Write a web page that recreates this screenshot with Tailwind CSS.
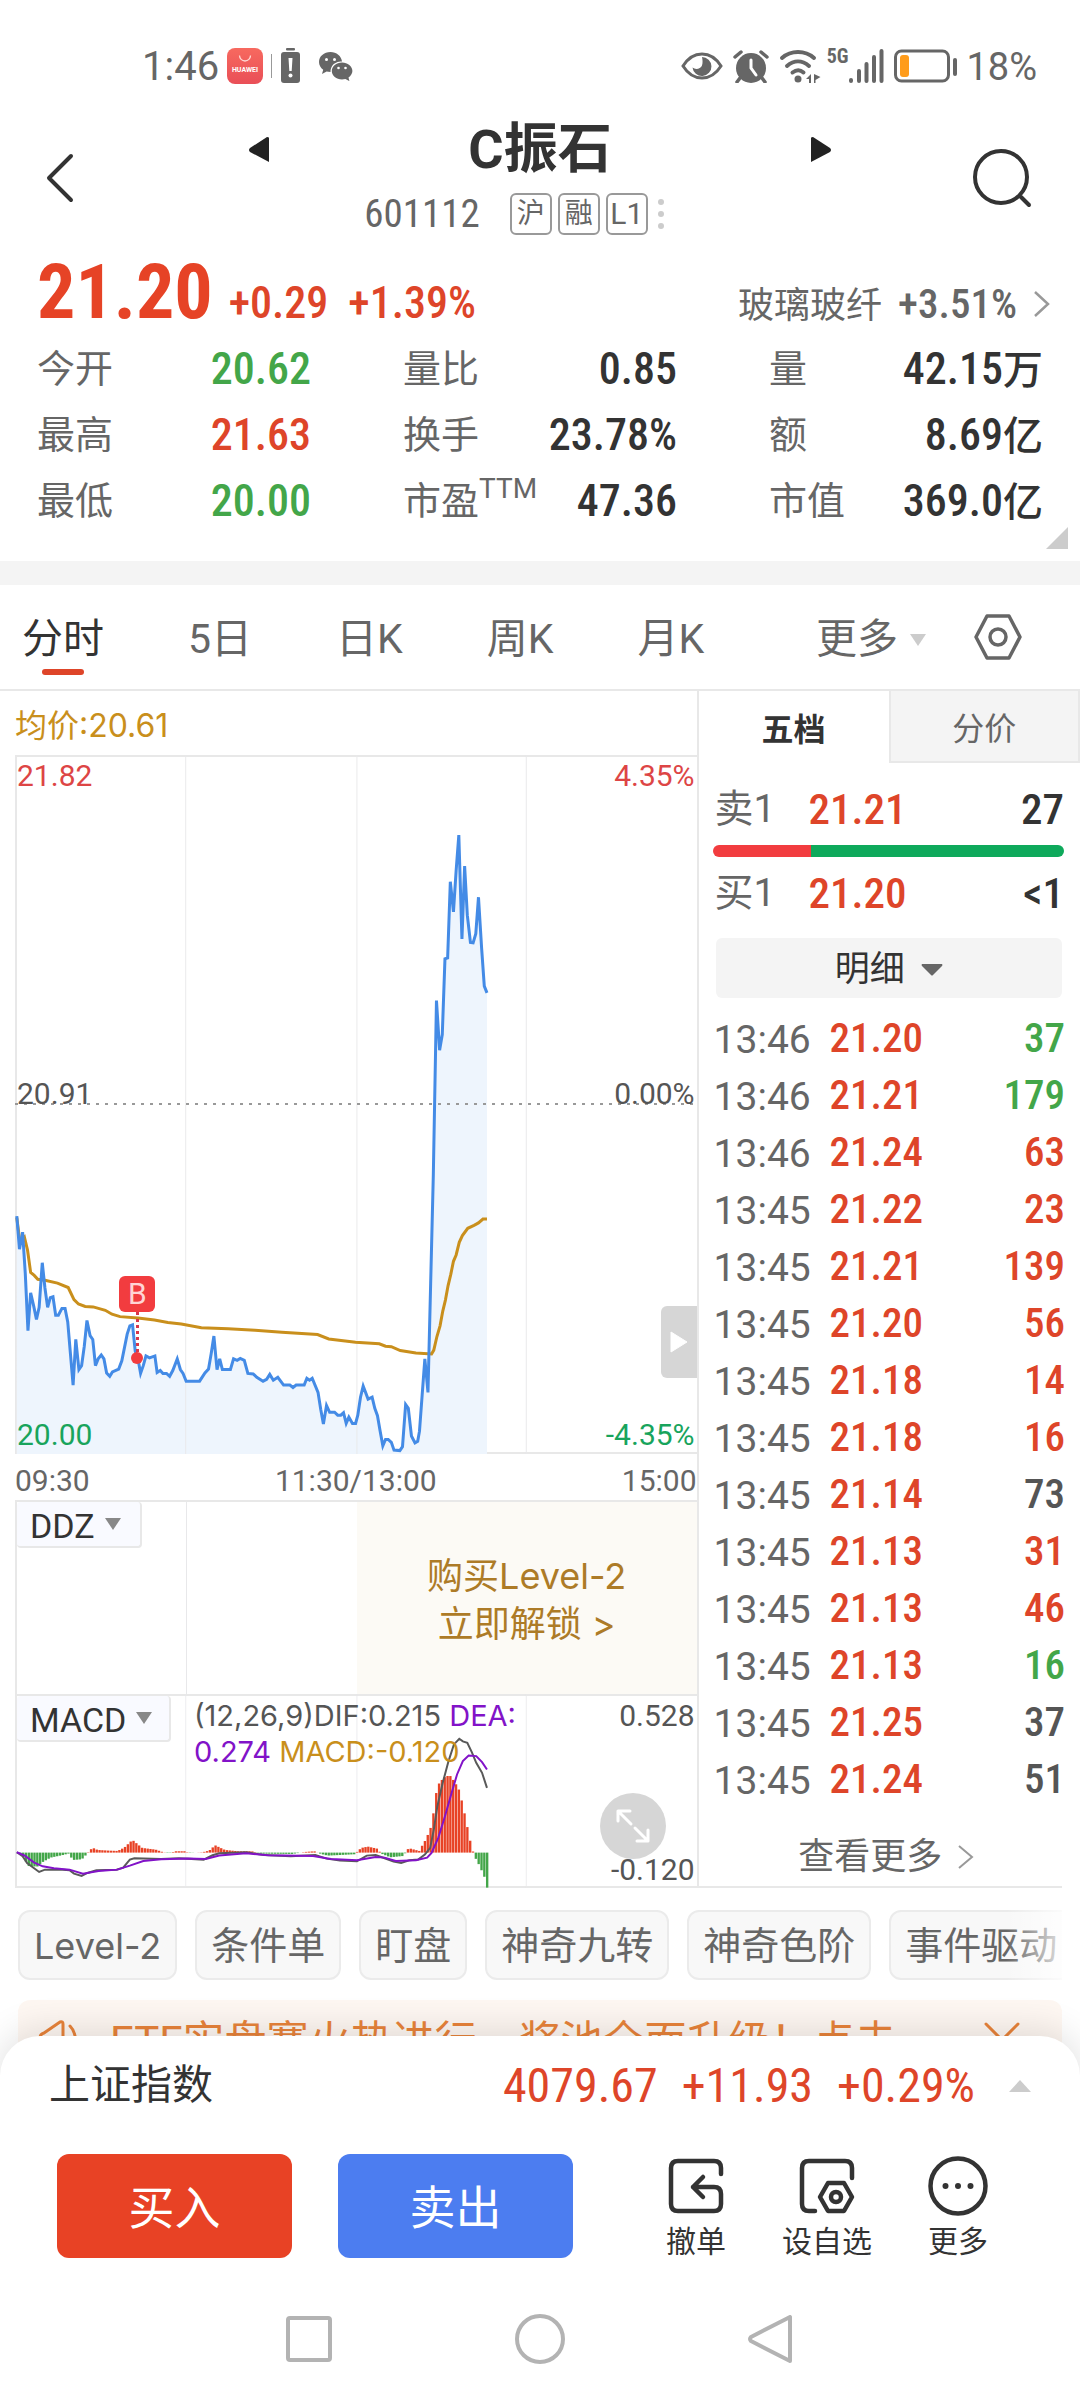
<!DOCTYPE html>
<html lang="zh-CN">
<head>
<meta charset="utf-8">
<meta name="viewport" content="width=device-width, initial-scale=1">
<title>C振石 601112</title>
<script src="https://cdn.jsdelivr.net/npm/@tailwindcss/browser@4"></script>
</head>
<body class="bg-white text-[#333] font-['Roboto','Noto_Sans_CJK_SC',sans-serif]">
<div class="flex min-h-screen flex-col overflow-hidden">

  <!-- Status bar -->
  <div class="flex h-[108px] items-center justify-between pt-6 pl-[142px] pr-[43px] text-[#666]">
    <div class="flex items-center">
      <span class="w-[85px] pt-0.5 text-[40px] leading-none">1:46</span>
      <svg class="size-9" viewBox="0 0 36 36"><defs><linearGradient id="hw" x1="0" y1="0" x2="0" y2="1"><stop offset="0" stop-color="#f7695f"/><stop offset="1" stop-color="#e94f57"/></linearGradient></defs><rect width="36" height="36" rx="8" fill="url(#hw)"/><path d="M12.500 7.500a5.500 5.500 0 0 0 11 0" fill="none" stroke="#ffd9d4" stroke-width="1.300"/><text x="18" y="24" text-anchor="middle" font-family="Roboto" font-weight="700" font-size="7" fill="#fff">HUAWEI</text></svg>
      <span class="ml-2 h-6 w-px bg-[#999]"></span>
      <svg class="ml-2 h-9 w-[21px]" viewBox="0 0 21 36" fill="#666"><rect x="6" y="0" width="9" height="2.500" rx="1"/><rect x="1" y="4" width="19" height="31" rx="3"/><path d="M8.500 10h4l-.8 13h-2.400z" fill="#fff"/><circle cx="10.500" cy="27.500" r="2" fill="#fff"/></svg>
      <svg class="ml-[18px] h-[30px] w-[34px]" viewBox="0 0 34 30" fill="#666"><path d="M11.500 1C5 1 0 5.400 0 11c0 3.200 1.600 5.900 4.200 7.700L3 23l4.600-2.400c1.200.3 2.500.5 3.900.5A10 10 0 0 1 23 10.600C22.300 5 17.500 1 11.500 1z"/><path d="M23 11.500c-5.700 0-10.200 3.800-10.200 8.600s4.500 8.500 10.200 8.500c1.200 0 2.400-.2 3.400-.5l4 2-.9-3.500c2.300-1.600 3.900-4 3.900-6.500 0-4.800-4.700-8.600-10.400-8.600z"/><g fill="#fff"><circle cx="7.500" cy="8.500" r="1.500"/><circle cx="15.500" cy="8.500" r="1.500"/><circle cx="19.500" cy="17" r="1.300"/><circle cx="26.500" cy="17" r="1.300"/></g></svg>
    </div>
    <div class="flex items-center">
      <svg class="h-7 w-[42px]" viewBox="0 0 42 28"><path d="M2 14C7 6 14 2 21 2s14 4 19 12c-5 8-12 12-19 12S7 22 2 14z" fill="none" stroke="#666" stroke-width="3"/><path d="M21 5a9.500 9.500 0 1 1-9.500 10.500c3 2.500 8 1.500 9.500-2 1-3 .5-6 0-8.500z" fill="#666"/></svg>
      <svg class="ml-2.5 h-[34px] w-9" viewBox="0 0 36 34"><circle cx="18" cy="19" r="15" fill="#666"/><path d="M2 8l6-5M34 8l-6-5M7 29l-3 4M29 29l3 4" stroke="#666" stroke-width="3.500" stroke-linecap="round"/><path d="M18 11v8l5 7" fill="none" stroke="#fff" stroke-width="3" stroke-linecap="round"/></svg>
      <svg class="ml-2.5 h-[34px] w-[42px]" viewBox="0 0 42 34"><g fill="none" stroke="#666" stroke-width="4" stroke-linecap="round"><path d="M3 9c9-8 23-8 32 0"/><path d="M8 17c7-6 15-6 22 0"/><path d="M13.500 23.500c4-3 7.500-3 11 0"/></g><circle cx="19" cy="30" r="3.500" fill="#666"/><path d="M27 30l5-5v9h-2v-4zM35 25v9h1.500v-3l5-3z" fill="#666"/></svg>
      <span class="mb-5 ml-1.5 font-['Roboto_Condensed',sans-serif] text-[20px] leading-none font-bold">5G</span>
      <svg class="h-[34px] w-9" viewBox="0 0 36 34"><path d="M3 31v1M11 22v10M18.500 15v17M26 8v24M33.500 2v30" stroke="#666" stroke-width="4" stroke-linecap="round"/></svg>
      <svg class="ml-2.5 h-[34px] w-16" viewBox="0 0 64 34"><rect x="1.500" y="2" width="53" height="30" rx="6" fill="none" stroke="#666" stroke-width="3"/><rect x="6" y="6" width="9" height="22" rx="3" fill="#ff9c1b"/><rect x="59" y="9" width="4" height="18" rx="2" fill="#666"/></svg>
      <span class="ml-2 pt-0.5 text-[38px] leading-none">18%</span>
    </div>
  </div>

  <!-- Title -->
  <header class="flex h-[140px] items-center">
    <button class="flex w-[120px] justify-center" aria-label="返回"><svg class="h-[50px] w-8" viewBox="0 0 32 50" fill="none" stroke="#333" stroke-width="4" stroke-linecap="round" stroke-linejoin="round"><path d="M27 3L5 25l22 22"/></svg></button>
    <div class="flex h-full flex-1 flex-col">
      <div class="flex h-20 items-center justify-between px-[128px] pt-1">
        <button aria-label="上一只"><svg class="h-7 w-[22px]" viewBox="0 0 22 28"><path d="M21 2v24L2 16q-2-2 0-4L19 1q2 0 2 1z" fill="#222"/></svg></button>
        <h1 class="text-[54px] leading-none font-bold">C振石</h1>
        <button aria-label="下一只"><svg class="h-7 w-[22px]" viewBox="0 0 22 28"><path d="M1 2v24l19-10q2-2 0-4L3 1Q1 1 1 2z" fill="#222"/></svg></button>
      </div>
      <div class="flex h-[52px] items-center justify-center gap-1.5 pr-[52px] text-[#666]">
        <span class="mr-6 font-['Roboto_Condensed',sans-serif] text-[39px] leading-none">601112</span>
        <span class="flex size-[42px] items-center justify-center rounded-md border-2 border-[#999] text-[28px] leading-none">沪</span>
        <span class="flex size-[42px] items-center justify-center rounded-md border-2 border-[#999] text-[28px] leading-none">融</span>
        <span class="flex size-[42px] items-center justify-center rounded-md border-2 border-[#999] text-[30px] leading-none">L1</span>
        <span class="ml-1 flex flex-col gap-1.5"><i class="size-1.5 rounded-full bg-[#ccc]"></i><i class="size-1.5 rounded-full bg-[#ccc]"></i><i class="size-1.5 rounded-full bg-[#ccc]"></i></span>
      </div>
    </div>
    <button class="flex w-[120px] justify-center pr-9" aria-label="搜索"><svg class="size-[60px]" viewBox="0 0 60 60" fill="none" stroke="#333" stroke-width="4" stroke-linecap="round"><circle cx="29" cy="29" r="26"/><path d="M49 49l8 8"/></svg></button>
  </header>

  <!-- Quote summary -->
  <section class="relative px-[37px] pb-[27px] font-['Roboto_Condensed','Noto_Sans_CJK_SC',sans-serif]">
    <div class="flex h-[88px] items-baseline font-medium text-[#de4529]">
      <strong class="text-[76px] leading-[88px] font-bold text-[#e64326]">21.20</strong>
      <span class="ml-4 text-[44px]">+0.29</span>
      <span class="ml-5 text-[44px]">+1.39%</span>
      <a href="#" class="-mr-2 ml-auto flex items-baseline font-normal text-[#666]"><span class="text-[36px]">玻璃玻纤</span><span class="ml-4 text-[41px] font-medium">+3.51%</span><svg class="ml-4 h-7 w-[18px]" viewBox="0 0 18 28" fill="none" stroke="#999" stroke-width="2.500"><path d="M2 2l13 12L2 26"/></svg></a>
    </div>
    <dl class="grid grid-cols-3 gap-x-[92px] text-[38px] *:flex *:h-[66px] *:items-center *:justify-between">
      <div><dt class="text-[#666]">今开</dt><dd class="text-[44px] font-medium text-[#43a649]">20.62</dd></div>
      <div><dt class="text-[#666]">量比</dt><dd class="text-[44px] font-medium">0.85</dd></div>
      <div><dt class="text-[#666]">量</dt><dd class="text-[44px] font-medium">42.15<span class="text-[40px]">万</span></dd></div>
      <div><dt class="text-[#666]">最高</dt><dd class="text-[44px] font-medium text-[#de4529]">21.63</dd></div>
      <div><dt class="text-[#666]">换手</dt><dd class="text-[44px] font-medium">23.78%</dd></div>
      <div><dt class="text-[#666]">额</dt><dd class="text-[44px] font-medium">8.69<span class="text-[40px]">亿</span></dd></div>
      <div><dt class="text-[#666]">最低</dt><dd class="text-[44px] font-medium text-[#43a649]">20.00</dd></div>
      <div><dt class="flex text-[#666]">市盈<span class="font-['Roboto',sans-serif] text-[28px] leading-8">TTM</span></dt><dd class="text-[44px] font-medium">47.36</dd></div>
      <div><dt class="text-[#666]">市值</dt><dd class="text-[44px] font-medium">369.0<span class="text-[40px]">亿</span></dd></div>
    </dl>
    <svg class="absolute right-3 bottom-3 size-[22px]" viewBox="0 0 22 22"><path d="M22 0v22H0z" fill="#ccc"/></svg>
  </section>
  <div class="h-6 bg-[#f4f4f4]"></div>

  <!-- Period tabs -->
  <nav class="flex h-[106px] items-center gap-[84px] border-b-2 border-[#e8e8e8] pt-1.5 pr-[58px] pl-[22px] text-[41px] text-[#666]">
    <button class="relative text-[#333]">分时<i class="absolute inset-x-0 -bottom-1 mx-auto h-1.5 w-[42px] rounded-full bg-[#de4529]"></i></button>
    <button>5日</button>
    <button>日K</button>
    <button>周K</button>
    <button>月K</button>
    <button class="-mr-8 ml-auto flex items-center gap-3">更多<svg class="h-3 w-4" viewBox="0 0 16 12"><path d="M0 0h16L8 12z" fill="#ccc"/></svg></button>
    <button class="-ml-1 pb-1.5" aria-label="设置"><svg class="size-12" viewBox="0 0 48 48" fill="none" stroke="#666" stroke-width="3.500" stroke-linejoin="round"><path d="M13 3h22l11 21-11 21H13L2 24z"/><circle cx="24" cy="24" r="8"/></svg></button>
  </nav>

  <main class="flex">
    <!-- Charts -->
    <div class="flex w-[64.5%] shrink-0 flex-col pl-[15px] font-['Inter','Noto_Sans_CJK_SC',sans-serif]">
      <div class="flex h-16 items-center pt-1.5 text-[32px] text-[#c98f1c]">均价:20.61</div>

      <div class="relative h-[699px] border-2 border-r-0 border-[#e8e8e8] font-['Roboto',sans-serif] text-[30px] leading-none">
        <svg class="absolute -top-0.5 -left-0.5 h-[calc(100%+4px)] w-[calc(100%+2px)]" viewBox="33 32 1525 1440" preserveAspectRatio="none" fill="none">
          <path d="M37 982L43 1050L50 1015L56 1100L62 1218L68 1140L75 1168L81 1195L87 1170L94 1078L100 1130L106 1170L112 1150L118 1148L124 1186L130 1186L138 1172L145 1172L151 1200L157 1265L163 1330L169 1236L176 1298L182 1290L188 1250L194 1197L201 1228L207 1236L213 1290L219 1276L226 1268L232 1276L238 1305L245 1312L251 1303L265 1297L272 1280L284 1225L290 1208L296 1206L302 1260L308 1275L314 1306L320 1290L326 1270L334 1274L346 1270L351 1304L358 1300L364 1306L372 1306L379 1312L386 1300L396 1276L403 1298L409 1306L416 1322L446 1322L458 1305L466 1297L472 1265L478 1229L485 1298L491 1276L497 1298L515 1298L522 1276L530 1279L537 1275L546 1279L554 1306L566 1307L574 1314L588 1322L596 1318L603 1308L611 1320L621 1314L634 1330L648 1330L655 1335L662 1330L680 1330L686 1316L692 1320L698 1316L711 1345L717 1380L723 1410L730 1372L737 1386L748 1386L755 1392L762 1392L768 1387L774 1409L780 1396L788 1409L795 1409L800 1392L806 1355L812 1332L823 1359L832 1355L838 1378L844 1393L850 1425L856 1455L862 1442L868 1442L875 1448L881 1464L894 1465L900 1457L907 1370L913 1378L920 1435L928 1449L934 1446L938 1425L944 1350L950 1276L957 1345L963 1120L969 895L976 538L983 640L989 608L995 452L1001 450L1007 293L1014 355L1020 270L1026 197L1033 411L1039 261L1045 362L1052 418L1058 419L1064 400L1070 325L1077 430L1083 508L1089 522V1472H37Z" fill="#eef5fd"/>
          <path d="M33 32V1472M415 32V1472M798 32V1472M1177 32V1472" stroke="#e8e8ea" stroke-width="2"/>
          <path d="M33 751H1558" stroke="#999" stroke-width="2" stroke-dasharray="3 6" vector-effect="non-scaling-stroke"/>
          <path d="M37 985L44 1035L54 1025L61 1052L68 1098L76 1104L84 1112L100 1114L128 1120L152 1129L165 1154L175 1163L190 1168L208 1169L235 1176L250 1184L268 1189L308 1192L345 1196L375 1201L405 1204L450 1212L510 1214L570 1217L630 1221L710 1226L735 1235L795 1242L848 1245L862 1250L875 1251L895 1259L930 1264L965 1266L970 1258L977 1230L984 1208L990 1178L996 1155L1002 1125L1008 1102L1014 1075L1020 1062L1027 1036L1034 1022L1046 1007L1060 1001L1070 996L1080 988L1089 988" stroke="#c98f1c" stroke-width="3" vector-effect="non-scaling-stroke"/>
          <path d="M37 982L43 1050L50 1015L56 1100L62 1218L68 1140L75 1168L81 1195L87 1170L94 1078L100 1130L106 1170L112 1150L118 1148L124 1186L130 1186L138 1172L145 1172L151 1200L157 1265L163 1330L169 1236L176 1298L182 1290L188 1250L194 1197L201 1228L207 1236L213 1290L219 1276L226 1268L232 1276L238 1305L245 1312L251 1303L265 1297L272 1280L284 1225L290 1208L296 1206L302 1260L308 1275L314 1306L320 1290L326 1270L334 1274L346 1270L351 1304L358 1300L364 1306L372 1306L379 1312L386 1300L396 1276L403 1298L409 1306L416 1322L446 1322L458 1305L466 1297L472 1265L478 1229L485 1298L491 1276L497 1298L515 1298L522 1276L530 1279L537 1275L546 1279L554 1306L566 1307L574 1314L588 1322L596 1318L603 1308L611 1320L621 1314L634 1330L648 1330L655 1335L662 1330L680 1330L686 1316L692 1320L698 1316L711 1345L717 1380L723 1410L730 1372L737 1386L748 1386L755 1392L762 1392L768 1387L774 1409L780 1396L788 1409L795 1409L800 1392L806 1355L812 1332L823 1359L832 1355L838 1378L844 1393L850 1425L856 1455L862 1442L868 1442L875 1448L881 1464L894 1465L900 1457L907 1370L913 1378L920 1435L928 1449L934 1446L938 1425L944 1350L950 1276L957 1345L963 1120L969 895L976 538L983 640L989 608L995 452L1001 450L1007 293L1014 355L1020 270L1026 197L1033 411L1039 261L1045 362L1052 418L1058 419L1064 400L1070 325L1077 430L1083 508L1089 522" stroke="#448be6" stroke-width="3" vector-effect="non-scaling-stroke"/>
        </svg>
        <div class="relative flex h-full flex-col justify-between pt-1 pr-0.5 pb-0.5">
          <div class="flex justify-between text-[#dd4545]"><span>21.82</span><span>4.35%</span></div>
          <div class="flex justify-between pb-6 text-[#555]"><span>20.91</span><span>0.00%</span></div>
          <div class="flex justify-between text-[#18a45c]"><span>20.00</span><span>-4.35%</span></div>
        </div>
        <div class="absolute top-[74.7%] left-[17.7%] flex -translate-x-1/2 flex-col items-center">
          <span class="flex size-9 items-center justify-center rounded-md bg-[#f23c3f] text-[30px] text-[#ffd5d5]">B</span>
          <i class="h-10 border-l-3 border-dotted border-[#d8364a]"></i>
          <i class="size-3 rounded-full bg-[#f23c3f]"></i>
        </div>
        <button class="absolute top-[79%] right-0 flex h-[72px] w-9 items-center justify-center rounded-l-md bg-[#d6d6d6]" aria-label="展开"><svg class="h-[22px] w-[18px]" viewBox="0 0 18 22"><path d="M1 1v20l16-10z" fill="#fff" stroke="#fff" stroke-linejoin="round"/></svg></button>
      </div>

      <div class="flex h-[46px] items-center justify-between pt-1.5 font-['Roboto',sans-serif] text-[30px] text-[#666]"><span>09:30</span><span>11:30/13:00</span><span>15:00</span></div>

      <div class="grid h-[194px] grid-cols-4 border-t-2 border-l-2 border-[#e8e8e8]">
        <div class="border-r border-[#e8e8ea]"><button class="flex h-[46px] w-[125px] items-center gap-2.5 rounded-sm border-2 border-t-0 border-l-0 border-[#e8e8e8] bg-[#f9faff] pt-1 pl-[13px] font-['Roboto',sans-serif] text-[34px]">DDZ<svg class="-mt-1 h-3 w-4" viewBox="0 0 16 12"><path d="M0 0h16L8 12z" fill="#888"/></svg></button></div>
        <div></div>
        <a href="#" class="col-span-2 flex items-center justify-center bg-[#fcfaf5] pt-1 text-center text-[36px] leading-[48px] text-[#ad7b27]"><span>购买Level-2<br>立即解锁 &gt;</span></a>
      </div>

      <div class="relative h-[194px] border-2 border-r-0 border-[#e8e8e8] text-[29px]">
        <svg id="macd" class="absolute -top-0.5 -left-0.5 h-[calc(100%+4px)] w-[calc(100%+2px)]" viewBox="33 764 1525 581" preserveAspectRatio="none" fill="none">
          <path d="M415 764V1345M798 764V1345M1177 764V1345" stroke="#e8e8ea" stroke-width="2"/>
          <g id="bars"></g>
          <path d="M37 1238L50 1250L60 1270L75 1285L87 1297L100 1290L140 1290L155 1292L165 1302L182 1309L195 1300L215 1292L260 1290L275 1284L290 1260L300 1256L360 1258L400 1256L455 1260L475 1247L490 1241L550 1238L590 1246L650 1250L705 1246L730 1257L760 1263L798 1265L820 1248L840 1246L860 1256L880 1266L897 1270L915 1262L935 1260L950 1245L962 1225L970 1170L978 1100L990 1030L1003 965L1015 915L1027 898L1035 906L1045 910L1055 938L1065 970L1078 1000L1089 1045" stroke="#595959" stroke-width="2" vector-effect="non-scaling-stroke"/>
          <path d="M37 1238L55 1248L75 1268L95 1280L120 1286L155 1290L185 1302L220 1294L262 1290L290 1278L320 1264L360 1259L420 1257L460 1258L490 1248L550 1241L600 1247L700 1249L740 1258L798 1262L840 1252L860 1254L885 1264L930 1262L955 1254L965 1240L980 1195L995 1130L1010 1060L1022 1005L1035 965L1048 948L1065 950L1078 968L1089 990" stroke="#8213c8" stroke-width="2" vector-effect="non-scaling-stroke"/>
        </svg>
        <button class="absolute top-0 left-0 flex h-[46px] w-[154px] items-center gap-2.5 rounded-sm border-2 border-t-0 border-l-0 border-[#e8e8e8] bg-[#f9faff] pt-1 pl-[13px] font-['Roboto',sans-serif] text-[34px]">MACD<svg class="-mt-1 h-3 w-4" viewBox="0 0 16 12"><path d="M0 0h16L8 12z" fill="#888"/></svg></button>
        <p class="absolute top-0.5 left-[177px] leading-9 whitespace-nowrap text-[#555]">(12,26,9)DIF:0.215 <span class="text-[#8213c8]">DEA:<br>0.274</span> <span class="text-[#c98f1c]">MACD:-0.120</span></p>
        <div class="relative flex h-full flex-col items-end justify-between pt-1 pr-0.5 font-['Roboto',sans-serif] text-[30px] leading-8 text-[#555]"><span>0.528</span><span>-0.120</span></div>
        <button class="absolute right-[31px] bottom-[27px] flex size-[66px] items-center justify-center rounded-full bg-[#d6d6d6]" aria-label="全屏"><svg class="size-9" viewBox="0 0 36 36" fill="none" stroke="#fff" stroke-width="3" stroke-linecap="round" stroke-linejoin="round"><path d="M3 13V3h12M3 3l13 13M33 22v11H22M33 33L20 20"/></svg></button>
      </div>
    </div>

    <!-- Order book and trades -->
    <div class="flex min-w-0 flex-1 flex-col border-l-2 border-[#e8e8e8]">
      <div class="grid h-[72px] grid-cols-[190px_1fr] text-[32px]">
        <button class="pt-1.5 font-bold">五档</button>
        <button class="border-2 border-t-0 border-[#e8e8e8] bg-[#f4f4f4] pt-1.5 text-[#666]">分价</button>
      </div>
      <div class="pt-[18px] pr-4 pl-4 font-['Roboto_Condensed',sans-serif] text-[43px] font-medium">
        <div class="flex h-[56px] items-center"><span class="w-[94px] font-['Roboto','Noto_Sans_CJK_SC',sans-serif] text-[39px] font-normal text-[#666]">卖1</span><span class="text-[#de4529]">21.21</span><span class="ml-auto">27</span></div>
        <div class="mt-2 -ml-0.5 flex h-3 overflow-hidden rounded-full"><i class="w-[28%] bg-[#f23c3f]"></i><i class="flex-1 bg-[#0ea95b]"></i></div>
        <div class="mt-2 flex h-[56px] items-center"><span class="w-[94px] font-['Roboto','Noto_Sans_CJK_SC',sans-serif] text-[39px] font-normal text-[#666]">买1</span><span class="text-[#de4529]">21.20</span><span class="ml-auto">&lt;1</span></div>
      </div>
      <button class="mt-[17px] mr-[18px] ml-[17px] flex h-[60px] items-center justify-center gap-4 rounded-md bg-[#f4f4f4] pt-1 text-[35px]">明细<svg class="h-3 w-[22px]" viewBox="0 0 22 12"><path d="M1 0h20q1 1 0 2l-9 9q-1 1-2 0L1 2Q0 1 1 0z" fill="#666"/></svg></button>
      <div class="pt-3 pr-[15px] pl-[15px]">
        <table class="w-full"><tbody id="trades"></tbody></table>
      </div>
      <a href="#" class="mr-[18px] flex flex-1 items-center justify-center gap-4 border-b-2 border-[#e8e8e8] pt-5 pl-3 text-[36px] text-[#666]">查看更多<svg class="h-6 w-4" viewBox="0 0 16 24" fill="none" stroke="#999" stroke-width="2"><path d="M1 1l13 11L1 23"/></svg></a>
    </div>
  </main>

  <!-- Tool chips -->
  <div class="relative mx-[18px] mt-[22px] overflow-hidden">
    <div class="flex gap-[18px] text-[38px] text-[#666] *:h-[70px] *:shrink-0 *:rounded-xl *:border-2 *:border-[#ebebeb] *:bg-[#f8f8f8] *:px-[14px] *:pt-0.5 *:leading-none">
      <button class="font-['Inter',sans-serif] text-[36px]">Level-2</button><button>条件单</button><button>盯盘</button><button>神奇九转</button><button>神奇色阶</button><button>事件驱动</button>
    </div>
    <div class="absolute inset-y-0 right-0 w-14 bg-linear-to-r from-white/0 to-white/80"></div>
  </div>

  <!-- Promo banner, tucked behind the bottom sheet -->
  <div class="mx-[18px] mt-5 flex h-20 items-center rounded-xl bg-[#fef7f2] pr-[42px] pl-5 text-[42px] leading-none text-[#e8833a]">
    <svg class="size-11 shrink-0" viewBox="0 0 44 44" fill="none" stroke="#e8833a" stroke-width="3" stroke-linecap="round" stroke-linejoin="round"><path d="M2 20q0-4 4-5L22 4q3-1 3 2v32q0 3-3 2L6 29q-4-1-4-5zM32 8c7 7 7 20 0 27"/></svg>
    <span class="ml-7 flex-1 overflow-hidden whitespace-nowrap pt-1">ETF实盘赛火热进行，奖池全面升级！点击</span>
    <button aria-label="关闭"><svg class="size-9" viewBox="0 0 36 36" stroke="#e8833a" stroke-width="3" stroke-linecap="round"><path d="M2 2l32 32M34 2L2 34"/></svg></button>
  </div>

  <!-- Bottom sheet -->
  <footer class="relative -mt-11 flex-1 rounded-t-[40px] bg-white shadow-[0_-6px_36px_rgba(0,0,0,0.12)]">
    <div class="flex h-24 items-center pt-1 pr-[49px] pl-[49px]">
      <span class="text-[41px]">上证指数</span>
      <div class="ml-auto flex gap-6 font-['Roboto_Condensed',sans-serif] text-[48px] text-[#de4529]"><span>4079.67</span><span>+11.93</span><span>+0.29%</span></div>
      <svg class="ml-[34px] h-3 w-[22px]" viewBox="0 0 22 12"><path d="M0 12L11 0l11 12z" fill="#ccc"/></svg>
    </div>
    <div class="mt-[22px] flex h-[104px] items-center pr-[92px] pl-[57px]">
      <button class="h-full w-[235px] rounded-xl bg-[#e84225] pt-1 text-[46px] text-white">买入</button>
      <button class="ml-[46px] h-full w-[235px] rounded-xl bg-[#4c7df0] pt-1 text-[46px] text-white">卖出</button>
      <div class="ml-auto flex h-full gap-[56px] pt-0.5 text-[30px] leading-8 *:flex *:flex-col *:items-center *:justify-between">
        <button><svg class="size-[60px]" viewBox="0 0 60 60" fill="none" stroke="#333" stroke-width="4.500" stroke-linecap="round" stroke-linejoin="round"><path d="M55 18v-6q0-7-7-7H12q-7 0-7 7v36q0 7 7 7h36q7 0 7-7V38q0-7-7-7H27M37 21L27 31l10 10"/></svg>撤单</button>
        <button><svg class="size-[60px]" viewBox="0 0 60 60" fill="none" stroke="#333" stroke-width="4.500" stroke-linecap="round" stroke-linejoin="round"><path d="M55 22V12q0-7-7-7H12q-7 0-7 7v36q0 7 7 7h6M31 27h16l8 14-8 14H31l-8-14z"/><circle cx="39" cy="41" r="5"/></svg>设自选</button>
        <button><svg class="size-[60px]" viewBox="0 0 60 60" fill="none" stroke="#333" stroke-width="4.500"><circle cx="30" cy="30" r="27.500"/><g fill="#333" stroke="none"><circle cx="17.500" cy="30" r="3"/><circle cx="30" cy="30" r="3"/><circle cx="42.500" cy="30" r="3"/></g></svg>更多</button>
      </div>
    </div>
    <div class="mt-[22px] flex h-[118px] items-center justify-center gap-[182px]">
      <button aria-label="最近任务"><svg class="size-12" viewBox="0 0 48 48" fill="none" stroke="#b3b3b3" stroke-width="4"><rect x="3" y="3" width="42" height="42" rx="2"/></svg></button>
      <button aria-label="主页"><svg class="size-[50px]" viewBox="0 0 50 50" fill="none" stroke="#b3b3b3" stroke-width="4"><circle cx="25" cy="25" r="23"/></svg></button>
      <button aria-label="后退"><svg class="size-12" viewBox="0 0 48 48" fill="none" stroke="#b3b3b3" stroke-width="4" stroke-linejoin="round"><path d="M43 2v44L4 26q-2-2 0-4z"/></svg></button>
    </div>
  </footer>
</div>

<script>
  const trades = [
    ['13:46', '21.20', '37', 'g'], ['13:46', '21.21', '179', 'g'], ['13:46', '21.24', '63', 'r'],
    ['13:45', '21.22', '23', 'r'], ['13:45', '21.21', '139', 'r'], ['13:45', '21.20', '56', 'r'],
    ['13:45', '21.18', '14', 'r'], ['13:45', '21.18', '16', 'r'], ['13:45', '21.14', '73', 'n'],
    ['13:45', '21.13', '31', 'r'], ['13:45', '21.13', '46', 'r'], ['13:45', '21.13', '16', 'g'],
    ['13:45', '21.25', '37', 'n'], ['13:45', '21.24', '51', 'n']
  ];
  const tone = { g: 'text-[#43a649]', r: 'text-[#de4529]', n: 'text-[#555]' };
  document.getElementById('trades').innerHTML = trades.map(([t, p, v, k]) => `
    <tr class="h-[57px] text-[41px] leading-none font-medium font-['Roboto_Condensed',sans-serif]">
      <td class="w-[116px] px-0 pt-1 pb-0 font-['Roboto',sans-serif] text-[39px] font-normal text-[#666]">${t}</td>
      <td class="p-0 text-[#de4529]">${p}</td>
      <td class="p-0 text-right ${tone[k]}">${v}</td>
    </tr>`).join('');

  // MACD histogram: minute bars interpolated between key readings
  const keys = [[36,0],[50,-15],[60,-40],[80,-42],[90,-30],[110,-15],[135,-8],[150,-3],[160,-22],[180,-20],[192,-3],[198,8],[205,14],[215,8],[240,6],[260,5],[275,15],[293,38],[315,14],[345,9],[360,2],[375,-2],[390,4],[410,4],[420,-1],[450,1],[465,6],[478,22],[500,8],[530,4],[560,4],[580,-3],[650,-4],[680,2],[700,4],[715,-4],[730,-9],[790,-5],[805,14],[820,18],[840,12],[850,-3],[870,-14],[900,-10],[908,10],[915,12],[935,5],[943,25],[950,40],[962,80],[968,130],[975,200],[990,225],[1003,232],[1015,210],[1025,185],[1035,125],[1045,60],[1052,15],[1060,-15],[1068,-35],[1080,-70],[1087,-106]];
  let bars = '', k = 0;
  for (let i = 0; i < 167; i++) {
    const x = 36 + i * 6.33;
    while (k < keys.length - 2 && keys[k + 1][0] < x) k++;
    const [x0, y0] = keys[k], [x1, y1] = keys[k + 1];
    const v = y0 + (y1 - y0) * (x - x0) / (x1 - x0);
    bars += `<rect x="${x}" y="${v > 0 ? 1239 - v : 1239}" width="5.300" height="${Math.abs(v)}" fill="${v > 0 ? '#e84225' : '#43a649'}"/>`;
  }
  document.getElementById('bars').innerHTML = bars;
</script>
</body>
</html>
